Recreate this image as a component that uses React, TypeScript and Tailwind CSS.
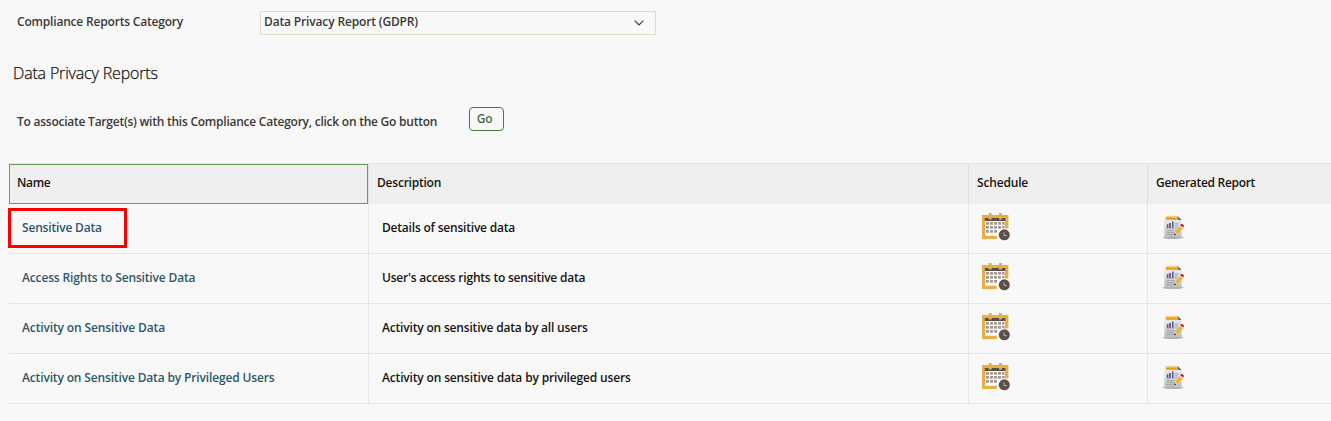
function CalendarIcon() {
  return (
    <svg width="28" height="28" viewBox="0 0 28 28" className="block" aria-hidden="true">
      <path d="M0 2H26.4V15.6H22.8V8H3.4V22.4H14.8V26H0Z" fill="#e8ae48" />
      <path d="M3.4 8H22.8V16L15 22.4H3.4Z" fill="#fdfdfd" />
      <path d="M2.8 5H23.4V8H2.8Z" fill="#5a4f47" />
      <path d="M6.7 0H9.7V6.6H6.7ZM17 0H20V6.6H17Z" fill="#e8ae48" />
      <path
        d="M4 9h3v2.7H4zM8 9h3v2.7H8zM12 9h3v2.7h-3zM16 9h3v2.7h-3zM20 9h2.6v2.7H20zM4 13h3v2.7H4zM8 13h3v2.7H8zM12 13h3v2.7h-3zM16 13h3v2.7h-3zM20 13h2.6v2.2H20zM4 17h3v2.7H4zM8 17h3v2.7H8zM12 17h3v2.7h-3z"
        fill="#a59b95"
      />
      <circle cx="22.3" cy="21.8" r="5.5" fill="#5a4f47" />
      <path d="M22 19.4V22.6H24.8" fill="none" stroke="#bdb6b1" strokeWidth="1" />
    </svg>
  );
}

function ReportIcon() {
  return (
    <svg width="23" height="25" viewBox="0 0 23 25" className="block" aria-hidden="true">
      <defs>
        <linearGradient id="sheet" x1="0" y1="0" x2="0" y2="1">
          <stop offset="0" stopColor="#eceef0" />
          <stop offset="0.5" stopColor="#dcdee1" />
          <stop offset="1" stopColor="#b9bbbd" />
        </linearGradient>
      </defs>
      <ellipse cx="11" cy="22.8" rx="11" ry="0.9" fill="#9c9c9c" />
      <path d="M2.3 0.4H15.6L19.6 4.6V22.6H2.3Z" fill="url(#sheet)" />
      <path d="M4 1.8H15L17 4.8H4Z" fill="#ee9d08" />
      <path d="M4 1.8H15V2.8H4Z" fill="#f7bd45" />
      <path d="M15.2 0.6L19.4 5H16.6Z" fill="#5c5c5c" />
      <path d="M4.8 9.2h1.6V13H4.8zM10 6.4h1.5V13H10z" fill="#2f62a8" />
      <path d="M7.2 8h1.6v5H7.2z" fill="#b3262b" />
      <path
        d="M4.4 13.2h7.6M12.8 8.8h3.6M12.8 10.8h3.2M12.8 12.8h2.4M4.6 15.6h8M4.6 17.6h7.2M4.6 19.6h6.4"
        stroke="#9a9ea4"
        strokeWidth="0.9"
        fill="none"
      />
      <path d="M12.6 20L13.4 16.2L18.2 10.4L21 13L16.2 18.6Z" fill="#f2b233" />
      <path d="M13.2 17L15.4 19L12.4 20.2Z" fill="#f4dfb8" />
      <path d="M12 20.4L12.7 18L14.2 19.4Z" fill="#2b2b2b" />
      <path d="M17.6 11.1L18.5 10L21.2 12.5L20.3 13.6Z" fill="#d5d8dc" />
      <path d="M18.2 10.1Q19.3 8.2 21.2 9.6Q22.8 11.2 21.2 12.6Z" fill="#b71c22" />
    </svg>
  );
}

const rows = [
  {
    name: "Sensitive Data",
    nameClass: "tracking-[-0.18px]",
    description: "Details of sensitive data",
    descriptionClass: "tracking-[-0.2px]",
    highlighted: true,
  },
  {
    name: "Access Rights to Sensitive Data",
    nameClass: "tracking-[-0.15px]",
    description: "User's access rights to sensitive data",
    descriptionClass: "tracking-[-0.21px]",
    highlighted: false,
  },
  {
    name: "Activity on Sensitive Data",
    nameClass: "tracking-[-0.13px]",
    description: "Activity on sensitive data by all users",
    descriptionClass: "tracking-[-0.18px]",
    highlighted: false,
  },
  {
    name: "Activity on Sensitive Data by Privileged Users",
    nameClass: "tracking-[-0.15px]",
    description: "Activity on sensitive data by privileged users",
    descriptionClass: "tracking-[-0.16px]",
    highlighted: false,
  },
];

const columns = "grid grid-cols-[360px_600px_179px_1fr]";

export default function App() {
  return (
    <main className="h-[421px] w-full overflow-hidden bg-[#f8f8f8] font-['Open_Sans','Noto_Sans',sans-serif] text-xs leading-4 font-semibold whitespace-nowrap text-[#3b3835]">
      <div className="flex items-center pt-[11px] pl-[17px]">
        <label className="w-[243px] pb-[2px] tracking-[-0.19px]">Compliance Reports Category</label>
        <button
          type="button"
          className="flex h-6 w-[396px] items-center justify-between rounded-[1px] border border-[#dbdfcb] pr-[11px] pl-[3px] text-left"
        >
          <span className="pb-[2px] tracking-[-0.15px]">Data Privacy Report (GDPR)</span>
          <svg width="10" height="6" viewBox="0 0 10 6" fill="none" aria-hidden="true">
            <path d="M0.7 0.7L5 5L9.3 0.7" stroke="#3b3835" strokeWidth="1.2" />
          </svg>
        </button>
      </div>

      <h1 className="mt-[26px] ml-[13px] text-base leading-6 font-light tracking-[-0.17px] text-[#161513] [-webkit-text-stroke:0.25px_#161513]">
        Data Privacy Reports
      </h1>

      <div className="mt-[22px] flex h-6 pl-[17px]">
        <p className="w-[452px] pt-[7px] tracking-[-0.24px]">
          To associate Target(s) with this Compliance Category, click on the Go button
        </p>
        <button
          type="button"
          className="flex h-6 w-[35px] justify-center rounded-[4px] border border-[#4b7942] pt-[3px] pr-1 tracking-[-0.3px] text-[#46703e]"
        >
          Go
        </button>
      </div>

      <section className="mt-8 ml-[9px]">
        <div className={`${columns} h-[41px] border-t border-[#e4e4e4] bg-[#efefef] text-[#161513]`}>
          <div className="flex border-r border-[#e0e0e0]">
            <div className="flex-1 border border-[#6b9a5e] pt-[10px] pl-[7px] tracking-[-0.35px]">Name</div>
          </div>
          <div className="border-r border-[#e0e0e0] pt-[11px] pl-2 tracking-[-0.22px]">Description</div>
          <div className="border-r border-[#e0e0e0] pt-[11px] pl-2 tracking-[-0.17px]">Schedule</div>
          <div className="pt-[11px] pl-2 tracking-[-0.3px]">Generated Report</div>
        </div>

        {rows.map((row) => (
          <div key={row.name} className={`${columns} h-[50px] border-b border-[#e6e6e6]`}>
            <div className="relative border-r border-[#e6e6e6] pt-4 pl-[13px] text-[#2c5967]">
              <a className={row.nameClass}>{row.name}</a>
              {row.highlighted && (
                <span className="absolute top-1 -left-px h-10 w-[119px] border-3 border-[#fb0000]" />
              )}
            </div>
            <div className="border-r border-[#e6e6e6] pt-4 pl-[13px] text-[#161513]">
              <span className={row.descriptionClass}>{row.description}</span>
            </div>
            <div className="border-r border-[#e6e6e6] pt-[9px] pl-[13px]">
              <CalendarIcon />
            </div>
            <div className="pt-[11px] pl-[14px]">
              <ReportIcon />
            </div>
          </div>
        ))}
      </section>
    </main>
  );
}
